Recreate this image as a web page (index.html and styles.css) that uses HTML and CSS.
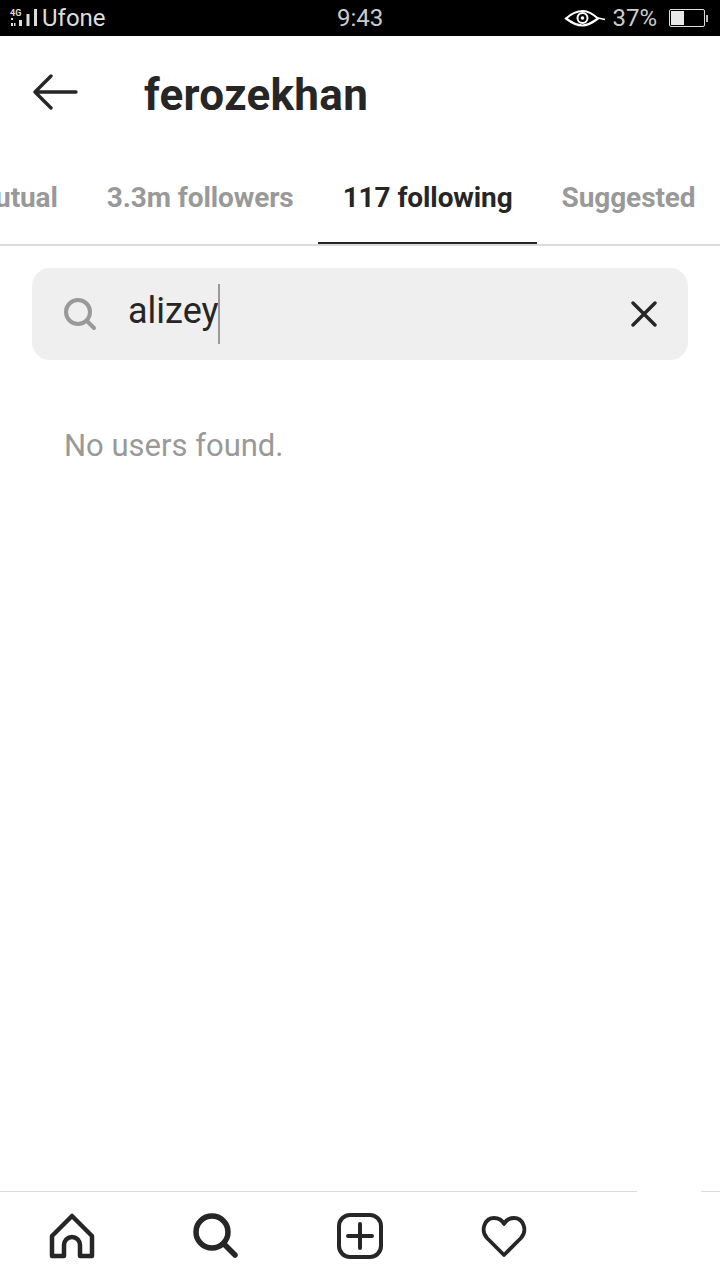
FILE: index.html
```html
<!DOCTYPE html>
<html lang="en">
<head>
<meta charset="utf-8">
<title>ferozekhan</title>
<link rel="stylesheet" href="styles.css">
</head>
<body>
<div class="app">
  <div class="status">
    <div class="status-left">
      <svg class="signal" width="33" height="20" viewBox="0 0 33 20">
        <text x="1" y="7.500" class="net">4G</text>
        <g fill="#ddd"><rect x="2" y="10" width="2" height="2"/><rect x="2" y="15" width="2" height="3"/><rect x="5" y="15" width="1.500" height="3"/><rect x="10" y="12" width="3" height="6"/><rect x="17.500" y="6" width="3" height="12"/><rect x="25" y="1" width="3" height="17"/></g>
      </svg>
      <span class="carrier">Ufone</span>
    </div>
    <div class="clock">9:43</div>
    <div class="status-right">
      <svg width="42" height="20" viewBox="0 0 42 20">
        <path d="M2 10.500C8 5 13 3 19 3s10 3 15 7.500C28 15 24 17.500 18.500 17.500S8 15 2 10.500Z" fill="none" stroke="#fff" stroke-width="2.200"/>
        <circle cx="18.500" cy="10" r="5" fill="none" stroke="#fff" stroke-width="2"/>
        <circle cx="18.500" cy="10" r="1.800" fill="#fff"/>
        <path d="M33 10h1l7 1.500" fill="none" stroke="#fff" stroke-width="1.500"/>
      </svg>
      <span class="pct">37%</span>
      <div class="battery"><div class="battery-level"></div></div>
      <div class="battery-tip"></div>
    </div>
  </div>

  <header class="top">
    <svg class="back" width="46" height="36" viewBox="0 0 46 36">
      <path d="M44 18H3M19 2 3 18l16 16" fill="none" stroke="#262626" stroke-width="3.400" stroke-linecap="round" stroke-linejoin="round"/>
    </svg>
    <h1 class="title">ferozekhan</h1>
  </header>

  <nav class="tabs">
    <div class="tab">82 mutual</div>
    <div class="tab">3.3m followers</div>
    <div class="tab active">117 following</div>
    <div class="tab">Suggested</div>
  </nav>

  <div class="search">
    <svg class="search-icon" width="34" height="34" viewBox="0 0 34 34">
      <circle cx="15" cy="15" r="12" fill="none" stroke="#999" stroke-width="4"/>
      <path d="M24 24l7 7" stroke="#999" stroke-width="4" stroke-linecap="round"/>
    </svg>
    <div class="query"><span class="query-text">alizey</span><i class="caret"></i></div>
    <svg class="clear" width="26" height="26" viewBox="0 0 26 26">
      <path d="M2 2l22 22M24 2 2 24" stroke="#262626" stroke-width="3.400" stroke-linecap="round"/>
    </svg>
  </div>

  <p class="empty">No users found.</p>

  <footer class="bottom">
    <i class="smudge"></i>
    <svg width="46" height="46" viewBox="0 0 46 46">
      <path d="M23 3 43 23v20H31V32a8 8 0 0 0-16 0v11H3V23Z" fill="none" stroke="#262626" stroke-width="4.500" stroke-linejoin="round"/>
    </svg>
    <svg width="46" height="46" viewBox="0 0 46 46">
      <circle cx="19" cy="19" r="16" fill="none" stroke="#262626" stroke-width="5.500"/>
      <path d="M31 31l11 11" stroke="#262626" stroke-width="5.500" stroke-linecap="round"/>
    </svg>
    <svg width="46" height="46" viewBox="0 0 46 46">
      <rect x="2" y="2" width="42" height="42" rx="11" fill="none" stroke="#262626" stroke-width="4"/>
      <path d="M23 11v24M11 23h24" stroke="#262626" stroke-width="4" stroke-linecap="round"/>
    </svg>
    <svg width="46" height="46" viewBox="0 0 46 46">
      <path d="M23 42 6 25C-1 17 4 5 13 5c4.500 0 8 2 10 6 2-4 5.500-6 10-6 9 0 14 12 7 20Z" fill="none" stroke="#262626" stroke-width="3.800" stroke-linejoin="round"/>
    </svg>
  </footer>
</div>
</body>
</html>
```

FILE: styles.css
```css
* { box-sizing: border-box; }
html, body { margin: 0; padding: 0; }
body { background: #fff; font-family: Roboto, "Liberation Sans", sans-serif; }
.app { width: 720px; height: 1280px; display: flex; flex-direction: column; overflow: hidden; background: #fff; }

.status { height: 36px; flex: none; background: #000; color: #ddd; position: relative; display: flex; align-items: center; justify-content: space-between; padding: 0 12px 0 9px; font-family: Roboto, sans-serif; }
.status-left { display: flex; align-items: center; }
.net { font-size: 9px; font-weight: 700; fill: #ddd; font-family: Roboto, sans-serif; }
.carrier { font-size: 24px; font-weight: 400; }
.clock { position: absolute; left: 337px; top: 2px; font-size: 24px; font-weight: 400; line-height: 32px; color: #ccc; }
.status-right { display: flex; align-items: center; }
.pct { font-size: 24px; font-weight: 400; color: #ccc; margin-left: 6px; margin-right: 12px; }
.battery { width: 36px; height: 18px; border: 1.500px solid #ddd; border-radius: 2px; padding: 1px; }
.battery-level { width: 13px; height: 100%; background: #e8e8e8; }
.battery-tip { width: 2px; height: 7px; background: #bbb; margin-left: 1px; }

.top { height: 118px; flex: none; display: flex; align-items: center; padding: 0 0 6px 32px; }
.back { flex: none; }
.title { margin: 6px 0 0 66px; font-size: 44px; line-height: 56px; font-weight: 700; color: #262626; letter-spacing: 0.3px; }

.tabs { height: 92px; flex: none; display: flex; justify-content: flex-end; border-bottom: 2px solid #dbdbdb; overflow: hidden; }
.tab { flex: none; padding: 27px 24.500px 0; font-size: 28px; line-height: 34px; font-weight: 700; color: #999; letter-spacing: -0.1px; }
.tab.active { color: #262626; border-bottom: 2px solid #262626; height: 90px; }

.search { height: 92px; flex: none; margin: 22px 32px 0; border-radius: 18px; background: #efefef; display: flex; align-items: center; padding: 0 31px 0 31px; }
.search-icon { flex: none; }
.query { flex: 1; margin-left: 31px; display: flex; align-items: center; height: 60px; font-size: 36px; color: #262626; }
.query-text { margin-top: -6px; }
.caret { width: 2px; height: 60px; background: #999; margin-left: -1px; }
.clear { flex: none; }

.empty { margin: 67px 0 0 64px; font-size: 31px; line-height: 38px; color: #999; }

.bottom { margin-top: auto; height: 89px; flex: none; border-top: 1px solid #dbdbdb; display: flex; align-items: flex-start; gap: 98px; padding: 21px 0 0 49px; position: relative; }
.smudge { position: absolute; left: 637px; top: -1px; width: 64px; height: 2px; background: #fff; }
```
